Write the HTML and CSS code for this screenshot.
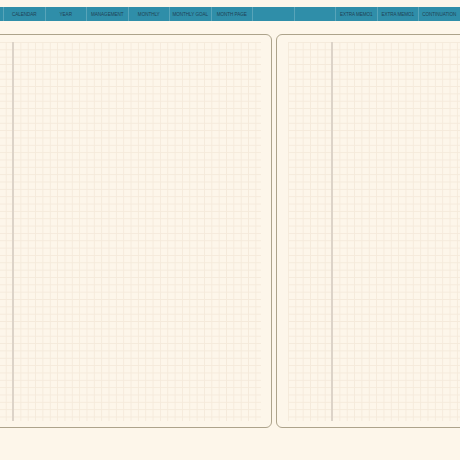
FILE: index.html
```html
<!DOCTYPE html>
<html>
<head>
<meta charset="utf-8">
<link rel="stylesheet" href="styles.css">
</head>
<body>
<nav class="tabs">
  <div class="tab">CALENDAR</div>
  <div class="tab">YEAR</div>
  <div class="tab">MANAGEMENT</div>
  <div class="tab">MONTHLY</div>
  <div class="tab">MONTHLY GOAL</div>
  <div class="tab">MONTH PAGE</div>
  <div class="tab"></div>
  <div class="tab"></div>
  <div class="tab">EXTRA MEMO1</div>
  <div class="tab">EXTRA MEMO1</div>
  <div class="tab">CONTINUATION</div>
</nav>
<main class="spread">
  <section class="page">
    <div class="grid"><div class="rule"></div></div>
  </section>
  <section class="page">
    <div class="grid"><div class="rule"></div></div>
  </section>
</main>
</body>
</html>
```
FILE: styles.css
```css
html, body {
  margin: 0;
  padding: 0;
  background: #fdf6ea;
  overflow: hidden;
  width: 460px;
  height: 460px;
}
.tabs {
  margin-top: 7px;
  height: 14px;
  background: #2f8ea9;
  display: flex;
  padding-left: 3px;
}
.tab {
  flex: 0 0 41.5px;
  box-sizing: border-box;
  border-left: 1px solid #58a4b9;
  display: flex;
  align-items: center;
  justify-content: center;
  font-family: "Liberation Sans", Arial, sans-serif;
  font-size: 4.6px;
  letter-spacing: -0.05px;
  color: #1f4355;
  white-space: nowrap;
  overflow: hidden;
}
.spread {
  display: flex;
  gap: 3.5px;
  margin-top: 13px;
  margin-left: -43.5px;
  width: 634.5px;
}
.page {
  flex: 0 0 315.5px;
  box-sizing: border-box;
  height: 394px;
  border: 1.5px solid #ada38b;
  border-radius: 6px;
  padding: 6.5px 10px 5px 11px;
}
.grid {
  height: 379px;
  background-image:
    linear-gradient(to right, #f5eadb 1px, transparent 1px),
    linear-gradient(to bottom, #f5eadb 1px, transparent 1px);
  background-size: 7.35px 7.35px;
}
.rule {
  margin-left: 43.5px;
  width: 1.5px;
  height: 100%;
  background: #dcd3c8;
}
```
